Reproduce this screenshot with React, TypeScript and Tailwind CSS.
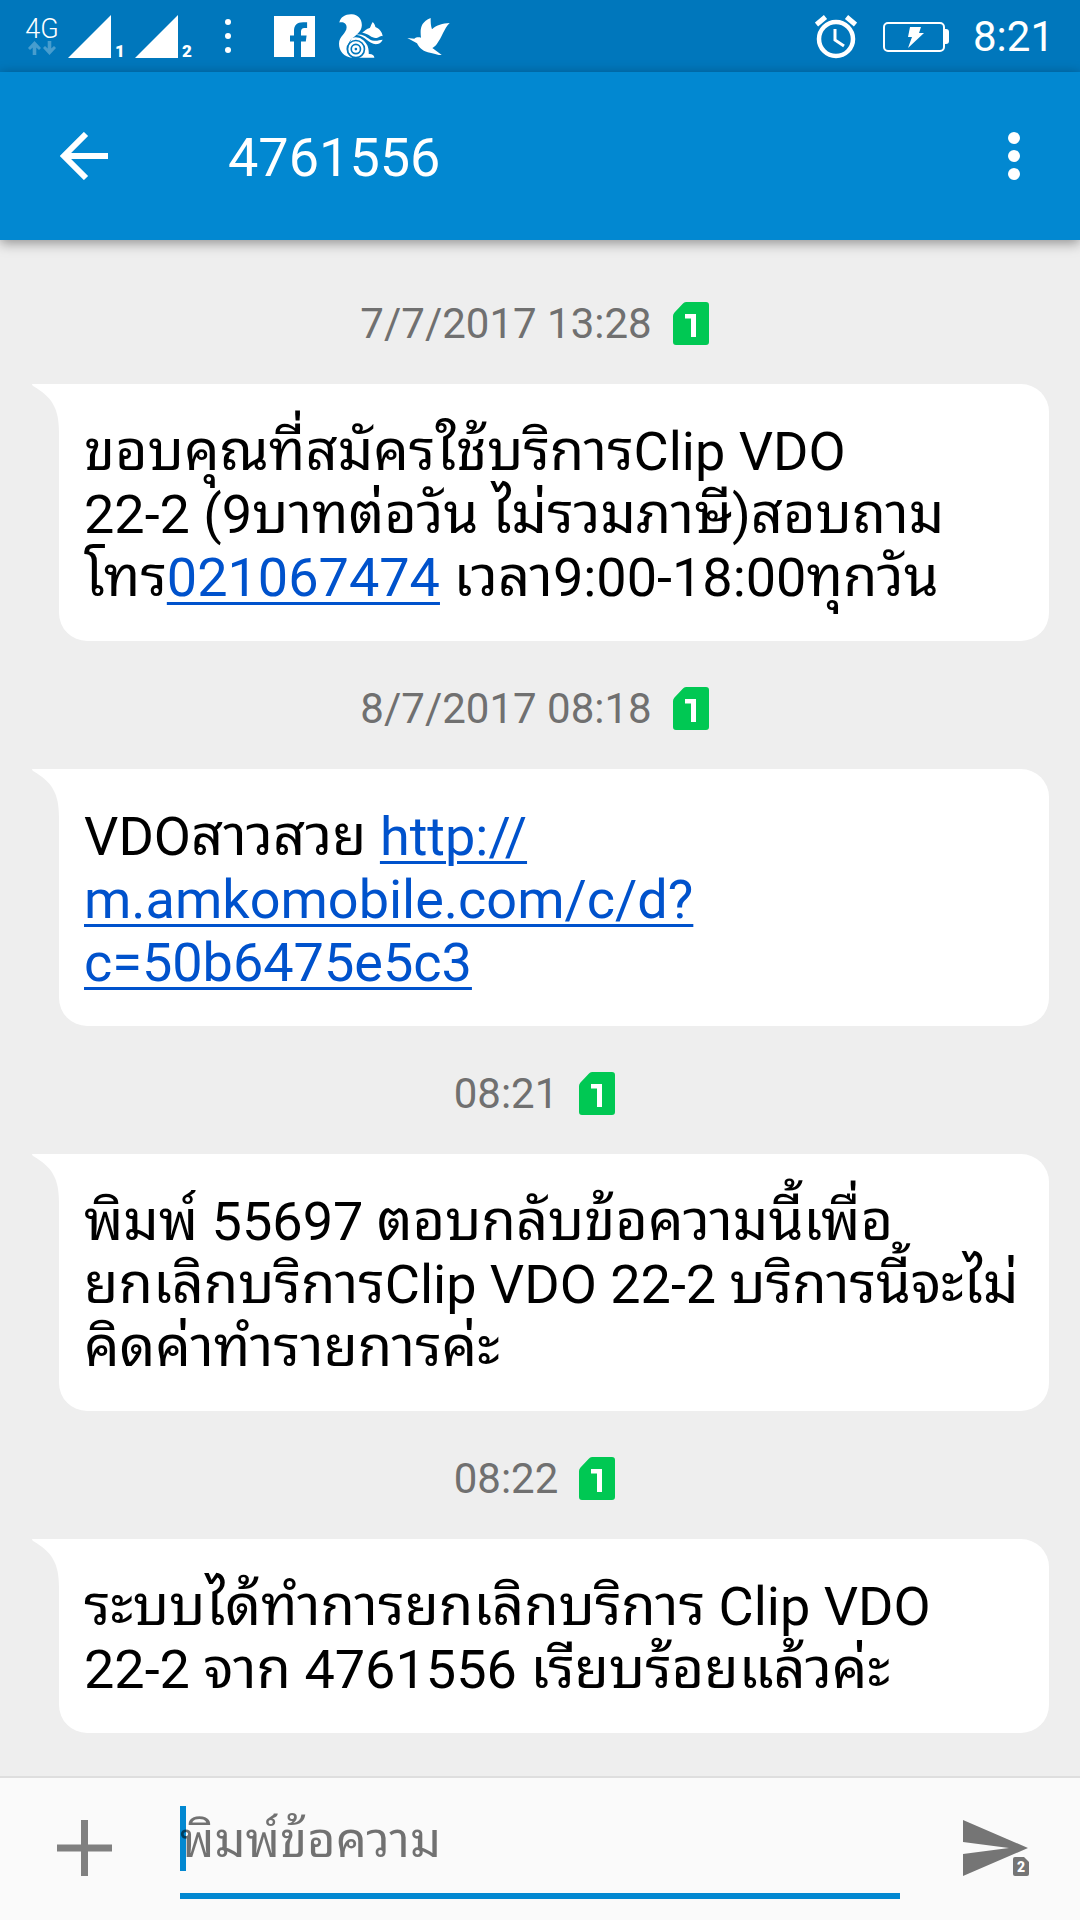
import type { ReactNode } from "react";

type Message = {
  time: string;
  lines: ReactNode[];
};

const linkClass = "text-[#0052cc] underline decoration-[3px] underline-offset-[6px]";

// Thai glyphs run small next to Roboto, so they get a slightly larger size
const Mixed = ({ text }: { text: string }) => (
  <>
    {text.split(/([\u0e00-\u0e7f]+)/).map((part, i) =>
      i % 2 ? (
        <span key={i} lang="th" className="text-[56px] leading-none">{part}</span>
      ) : (
        part
      )
    )}
  </>
);

const messages: Message[] = [
  {
    time: "7/7/2017 13:28",
    lines: [
      <Mixed text="ขอบคุณที่สมัครใช้บริการClip VDO" />,
      <Mixed text="22-2 (9บาทต่อวัน ไม่รวมภาษี)สอบถาม" />,
      <>
        <Mixed text="โทร" />
        <a href="tel:021067474" className={linkClass}>021067474</a>
        <Mixed text=" เวลา9:00-18:00ทุกวัน" />
      </>,
    ],
  },
  {
    time: "8/7/2017 08:18",
    lines: [
      <>
        <Mixed text="VDOสาวสวย " />
        <a href="#link" className={linkClass}>http://</a>
      </>,
      <a href="#link" className={linkClass}>m.amkomobile.com/c/d?</a>,
      <a href="#link" className={linkClass}>c=50b6475e5c3</a>,
    ],
  },
  {
    time: "08:21",
    lines: [
      <Mixed text="พิมพ์ 55697 ตอบกลับข้อความนี้เพื่อ" />,
      <Mixed text="ยกเลิกบริการClip VDO 22-2 บริการนี้จะไม่" />,
      <Mixed text="คิดค่าทำรายการค่ะ" />,
    ],
  },
  {
    time: "08:22",
    lines: [
      <Mixed text="ระบบได้ทำการยกเลิกบริการ Clip VDO" />,
      <Mixed text="22-2 จาก 4761556 เรียบร้อยแล้วค่ะ" />,
    ],
  },
];

const Signal = ({ sim }: { sim: string }) => (
  <div className="flex items-end">
    <svg width="43" height="43" viewBox="0 0 43 43" fill="white">
      <path d="M0 43 43 0V43Z" />
    </svg>
    <span className="ml-1 w-3 text-[17px] leading-[14px] font-black">{sim}</span>
  </div>
);

const StatusBar = () => (
  <div className="flex h-[72px] items-center justify-between bg-[#0077bc] pr-[26px] pl-[26px] text-white">
    <div className="flex items-center">
      <div className="flex w-8 flex-col items-center">
        <span className="text-[27px] leading-6 font-light">4G</span>
        <svg width="28" height="14" viewBox="0 0 28 14" fill="white" opacity="0.28">
          <path d="M6.5 0 13 7l-2 2-2.700-2.500V14H4.700V6.500L2 9 0 7Z" />
          <path d="M21.500 14 15 7l2-2 2.700 2.500V0h3.600v7.500L26 5l2 2Z" />
        </svg>
      </div>
      <div className="ml-2.5 flex gap-2">
        <Signal sim="1" />
        <Signal sim="2" />
      </div>
      <svg className="ml-[31px]" width="6" height="34" viewBox="0 0 6 34" fill="white">
        <circle cx="3" cy="3" r="3" />
        <circle cx="3" cy="17" r="3" />
        <circle cx="3" cy="31" r="3" />
      </svg>
      {/* facebook */}
      <svg className="ml-[43px]" width="41" height="41" viewBox="0 0 41 41" fill="white">
        <path d="M0 0h41v41h-5.500H27V25.500h4.800l.8-6H27v-3.700c0-2.500 1-3.800 3.500-3.800h2.600V6.300h-4C22.800 6.300 20 9.500 20 15v4.500h-4v6h4V41H0Z" />
      </svg>
      {/* squirrel */}
      <svg className="ml-6" width="44" height="44" viewBox="264 41 133 133" fill="white">
        <path d="M265 67C268 50 284 41 303 42c19 1 31 16 30 34-1 17-13 25-22 33-22 14-29 42-7 64-25-1-40-20-40-42 0-24 23-31 23-50 0-12-11-17-22-14Z" />
        <path d="M334 97c7-4 13-12 23-14 3-4 5-13 9-18 5 5 7 10 8 15 12 5 21 15 22 28-6-2-8 1-14 4-16 7-24-10-48-15Z" />
        <path d="M315 104c27-7 36 16 55 18 10 1 18-3 26-3-3 6-8 12-15 13-27 4-33-24-66-28Z" />
        <path d="M303 113c21-6 34 5 43 17 7 9 8 20 8 32 9-1 16 3 17 11h-55c-12 0-24-10-24-26 0-14 8-26 11-34Z" />
        <circle cx="315" cy="147" r="26" fill="none" stroke="#0077bc" strokeWidth="5" />
        <circle cx="315" cy="147" r="21" fill="white" />
        <circle cx="315" cy="147" r="14" fill="none" stroke="#0077bc" strokeWidth="5" />
        <circle cx="315" cy="147" r="4" fill="#0077bc" />
      </svg>
      {/* hummingbird */}
      <svg className="ml-6" width="43" height="38" viewBox="466 51 129 112" fill="white">
        <path d="M467 113 488 115c5-4 12-5 20-3-3-26-2-46 29-59 0 12 0 22 4 34 13-13 32-18 53-19-18 18-22 42-38 62-4 6-9 10-14 13l35 26c-14-5-30-9-42-12-18-2-32-13-39-28Z" />
      </svg>
    </div>
    <div className="flex items-center pt-0.5">
      <svg width="42" height="44" viewBox="0 0 42 44" fill="none" stroke="white">
        <circle cx="21" cy="24" r="17" strokeWidth="4.500" />
        <path d="M20 14v11l9 6" strokeWidth="3" />
        <path d="M1.500 9.500 10.500 2M31.500 2l9 7.500" strokeWidth="5" />
      </svg>
      <svg className="ml-[26px]" width="66" height="30" viewBox="0 0 66 30" fill="none">
        <rect x="1" y="1" width="60" height="28" rx="4" stroke="white" strokeWidth="2" />
        <path d="M60 7h3a3 3 0 0 1 3 3v9a3 3 0 0 1-3 3h-3Z" fill="white" />
        <path d="M27 5h11l-2 6h5L25 26l4-11h-4Z" fill="white" />
      </svg>
      <span className="ml-6 text-[42px] leading-none">8:21</span>
    </div>
  </div>
);

const SimBadge = () => (
  <svg className="ml-[21px]" width="48" height="44" viewBox="0 0 48 44" role="img" aria-label="SIM 1">
    <path d="M13 0H33a3 3 0 0 1 3 3V40a3 3 0 0 1-3 3H3a3 3 0 0 1-3-3V14q0-2 1.500-3.500L10 1.500Q11 0 13 0Z" fill="#00c853" />
    <path d="M12 12h11v23h-5V16.500h-6Z" fill="white" />
  </svg>
);

const Bubble = ({ lines }: { lines: ReactNode[] }) => (
  <div className="flex">
    <svg className="shrink-0" width="27" height="48" viewBox="0 0 27 48" fill="white">
      <path d="M0 0H27V48C27 24 20 13 1 2Q0 1 0 0Z" />
    </svg>
    <div className="min-w-0 flex-1 rounded-[28px] rounded-tl-none bg-white px-[25px] pt-9 pb-8 text-[54px] leading-[63px] text-black">
      {lines.map((line, i) => (
        <p key={i} className="whitespace-nowrap">{line}</p>
      ))}
    </div>
  </div>
);

const Composer = () => (
  <form className="flex h-36 items-start border-t-2 border-[#dedede] bg-[#fafafa]">
    <button type="button" aria-label="Attach" className="ml-[57px] pt-[42px]">
      <svg width="55" height="56" viewBox="0 0 55 56" fill="#808080">
        <path d="M24 0h7v24.500h24v7H31V56h-7V31.500H0v-7h24Z" />
      </svg>
    </button>
    <div className="relative ml-[68px] flex-1 border-b-[6px] border-[#0288d1] pt-7">
      <span className="absolute top-7 left-0 h-[65px] w-1.5 bg-[#0288d1]" />
      <input
        type="text"
        aria-label="พิมพ์ข้อความ"
        placeholder="พิมพ์ข้อความ"
        className="relative block h-[87px] w-full bg-transparent pb-[18px] text-[49px] text-black outline-none placeholder:text-[#000000]/55"
      />
    </div>
    <button type="submit" aria-label="Send" className="mr-[51px] ml-[63px] pt-[42px]">
      <svg width="66" height="56" viewBox="0 0 66 56" fill="#757575">
        <path d="M0 0 65 28 0 56V34L46 28 0 22Z" />
        <path d="M50 36h11l6 6v15H49V36Z" fill="#fafafa" />
        <path d="M52 37h9l5 5v12a2 2 0 0 1-2 2H52a2 2 0 0 1-2-2V39a2 2 0 0 1 2-2Z" />
        <text x="58" y="52" fontSize="14" fontWeight="900" textAnchor="middle" fill="white">2</text>
      </svg>
    </button>
  </form>
);

const App = () => {
  return (
    <div className="flex min-h-screen flex-col bg-[#eeeeee] font-['Roboto','Noto_Sans_Thai_Looped','Noto_Sans',sans-serif]">
      <StatusBar />
      <header className="flex h-[168px] items-center bg-[#0288d1] px-[60px] text-white shadow-[0_3px_12px_rgba(0,0,0,0.4)]">
        <button type="button" aria-label="Back">
          <svg width="48" height="48" viewBox="0 0 48 48" fill="none" stroke="white" strokeWidth="6">
            <path d="M26 2 4 24 26 46M4 24H48" />
          </svg>
        </button>
        <h1 className="ml-[120px] flex-1 pt-1 text-[54px] leading-none">4761556</h1>
        <button type="button" aria-label="More options">
          <svg width="12" height="48" viewBox="0 0 12 48" fill="white">
            <circle cx="6" cy="6" r="6" />
            <circle cx="6" cy="24" r="6" />
            <circle cx="6" cy="42" r="6" />
          </svg>
        </button>
      </header>

      <main className="flex-1 pt-4 pr-[31px] pl-8">
        {messages.map((message) => (
          <section key={message.time}>
            <div className="flex h-32 items-center justify-center pt-2 text-[42px] leading-none text-[#707070]">
              <time>{message.time}</time>
              <SimBadge />
            </div>
            <Bubble lines={message.lines} />
          </section>
        ))}
      </main>

      <Composer />
    </div>
  );
};

export default App;
